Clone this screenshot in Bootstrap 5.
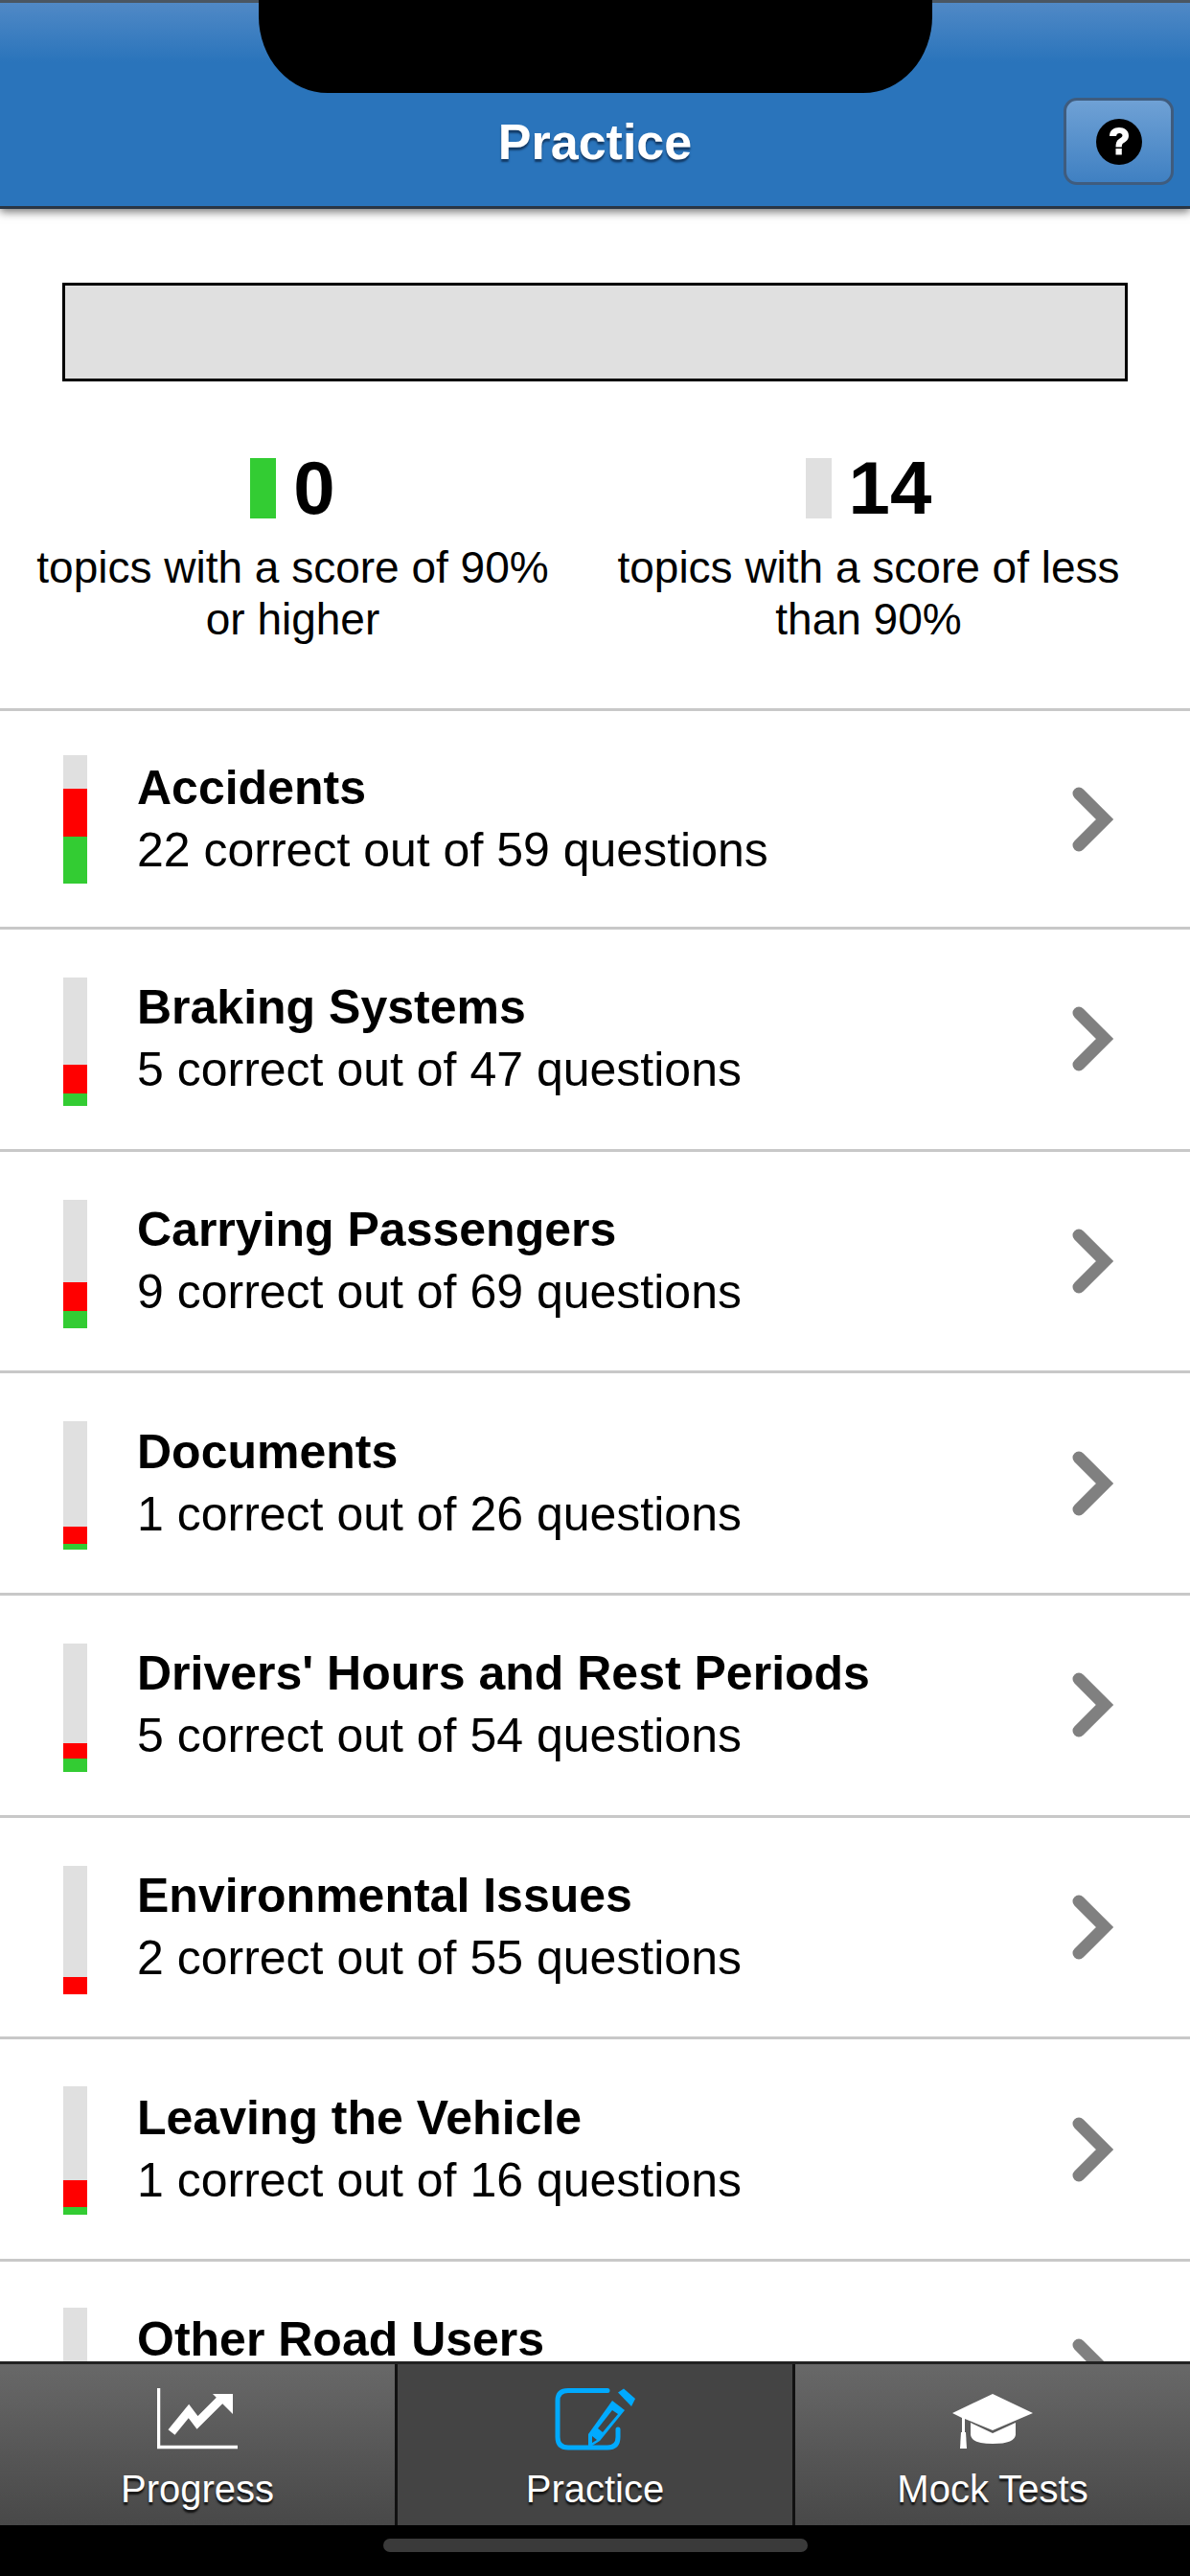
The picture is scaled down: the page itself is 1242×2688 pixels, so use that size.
<!DOCTYPE html>
<html lang="en">
<head>
  <meta charset="UTF-8">
  <meta name="viewport" content="width=device-width, initial-scale=1.0">
  <title>Practice</title>
  <link href="https://cdn.jsdelivr.net/npm/bootstrap@5.3.0/dist/css/bootstrap.min.css" rel="stylesheet">
  <style>
    html, body { height: 100%; }
    body {
      font-family: "Liberation Sans", Arial, sans-serif;
      background: #000;
      color: #000;
      width: 1242px;
      height: 2688px;
      overflow: hidden;
    }
    .app-header {
      height: 218px;
      padding: 99px 17px 22px 0;
      border-top: 3px solid #4a5662;
      border-bottom: 3px solid #2a3644;
      background: linear-gradient(#5089c6 0, #2a74bb 62px, #2a74bb 100%);
      box-shadow: 0 3px 9px rgba(0,0,0,.55);
      position: relative;
      z-index: 2;
    }
    .notch {
      position: absolute;
      top: -3px;
      left: 270px;
      width: 703px;
      height: 97px;
      background: #000;
      border-radius: 0 0 72px 72px / 0 0 80px 80px;
    }
    .app-title {
      flex: 1;
      text-align: center;
      padding-left: 132px;
      font-size: 52px;
      font-weight: 700;
      color: #fff;
      text-shadow: 0 3px 2px #123a66;
      line-height: 92px;
    }
    .help-btn {
      width: 115px;
      height: 91px;
      padding: 0;
      border: 3px solid #3f5c7e;
      border-radius: 14px;
      background: linear-gradient(#6fa1d5, #3f80c2);
    }
    .help-btn svg { display: block; margin: 0 auto; }
    .app-body { background: #fff; overflow: hidden; min-height: 0; }
    .overall-wrap { padding: 77px 65px 0; }
    .overall-bar { height: 103px; background: #e0e0e0; border: 3px solid #000; }
    .stats { padding: 80px 65px 66px 35px; gap: 60px; }
    .stat-head { height: 63px; gap: 18px; }
    .swatch { width: 27px; height: 63px; }
    .swatch-green { background: #33cc33; }
    .swatch-grey { background: #e0e0e0; }
    .stat-num { font-size: 78px; font-weight: 700; line-height: 63px; }
    .stat-text { font-size: 46px; line-height: 54px; margin-top: 24px; }
    .topic-row {
      height: 231.67px;
      padding: 0 79px 0 66px;
      border-top: 3px solid #c8c8c8;
    }
    .topic-row.first { height: 228px; }
    .score-bar {
      width: 25px;
      height: 134px;
      background: #e0e0e0;
    }
    .seg-red { background: #f00; }
    .seg-green { background: #33cc33; }
    .topic-text { padding-left: 52px; }
    .topic-name { font-size: 50px; font-weight: 700; line-height: 65px; }
    .topic-sub { font-size: 50px; line-height: 65px; }
    .tabbar {
      height: 171px;
      border-top: 3px solid #222;
      position: relative;
      z-index: 2;
    }
    .tab-item {
      flex: 1;
      background: linear-gradient(#686868, #484848);
      border-right: 3px solid #111;
      color: #fff;
      font-size: 40px;
      text-shadow: 0 3px 2px #111;
    }
    .tab-item:last-child { border-right: 0; }
    .tab-item.active { background: #444; }
    .tab-icon { height: 88px; padding-top: 24px; }
    .tab-label { line-height: 46px; margin-top: 19px; }
    .home-area { height: 53px; background: #000; padding-top: 14px; }
    .home-bar { width: 443px; height: 14px; border-radius: 7px; background: #3a3a3a; }
  </style>
</head>
<body class="d-flex flex-column">
  <header class="app-header d-flex flex-shrink-0 align-items-start">
    <div class="notch"></div>
    <div class="app-title">Practice</div>
    <button class="help-btn d-flex align-items-center justify-content-center" aria-label="Help">
      <svg width="48" height="48" viewBox="0 0 48 48">
        <circle cx="24" cy="24" r="24" fill="#000"/>
        <path d="M14 18c0-6 4.500-9 10-9s10 3 10 8.500c0 4-2.500 6-5 7.500-1.800 1.100-2.200 2-2.200 4.500h-6.300c0-4 .7-6.500 3.500-8.500 2-1.400 3.500-2.200 3.500-3.700 0-1.500-1.300-2.400-3-2.400-2 0-3.200 1.200-3.400 3.100z" fill="#fff"/>
        <rect x="20.500" y="31" width="6.300" height="6.500" fill="#fff"/>
      </svg>
    </button>
  </header>

  <main class="app-body flex-grow-1">
    <div class="overall-wrap"><div class="overall-bar"></div></div>
    <div class="stats d-flex text-center">
      <div class="flex-fill w-50">
        <div class="stat-head d-flex justify-content-center">
          <span class="swatch swatch-green"></span><span class="stat-num">0</span>
        </div>
        <div class="stat-text">topics with a score of 90% or higher</div>
      </div>
      <div class="flex-fill w-50">
        <div class="stat-head d-flex justify-content-center">
          <span class="swatch swatch-grey"></span><span class="stat-num">14</span>
        </div>
        <div class="stat-text">topics with a score of less than 90%</div>
      </div>
    </div>

    <div id="topics"></div>
  </main>

  <nav class="tabbar d-flex flex-shrink-0">
    <div class="tab-item text-center">
      <div class="tab-icon">
        <svg width="84" height="64" viewBox="0 0 84 64">
          <path d="M1.500 0V61.500H84" fill="none" stroke="#fff" stroke-width="3.500"/>
          <path d="M15 46L33 24L42 36L67 11" fill="none" stroke="#fff" stroke-width="9"/>
          <path d="M58 6H79V27z" fill="#fff"/>
        </svg>
      </div>
      <div class="tab-label">Progress</div>
    </div>
    <div class="tab-item active text-center">
      <div class="tab-icon">
        <svg width="84" height="66" viewBox="0 0 84 66" style="margin-top:-1px">
          <path d="M55 3.500H14Q3 3.500 3 14V52Q3 63 14 63H55Q66 63 66 52V44" fill="none" stroke="#00aaff" stroke-width="5" stroke-linecap="round"/>
          <path d="M60 14L73 24L47 56L35 63.500V49z" fill="#00aaff"/>
          <path d="M66 5.500L72 1.500L84 12L80 20z" fill="#00aaff"/>
          <path d="M60 24L66 28L50 47L45 43z" fill="#444"/>
          <path d="M39 51L44 55L39 58z" fill="#444"/>
        </svg>
      </div>
      <div class="tab-label">Practice</div>
    </div>
    <div class="tab-item text-center">
      <div class="tab-icon">
        <svg width="84" height="58" viewBox="0 0 84 58" style="margin-top:5px">
          <path d="M42 0L84 20L42 38L13 26V40H10V25L0 20z" fill="#fff"/>
          <path d="M19 30L42 41L66 30V42Q66 52 42 52Q19 52 19 42z" fill="#fff"/>
          <path d="M9 40H14L15 57H8z" fill="#fff"/>
        </svg>
      </div>
      <div class="tab-label">Mock Tests</div>
    </div>
  </nav>
  <div class="home-area d-flex justify-content-center flex-shrink-0"><div class="home-bar"></div></div>

  <script>
    // name, correct, total, red px, green px, offset of bar from row centre
    const topics = [
      ['Accidents', 22, 59, 50, 49, 0],
      ['Braking Systems', 5, 47, 30, 13, 3],
      ['Carrying Passengers', 9, 69, 30, 18, 3],
      ['Documents', 1, 26, 18, 6, 2],
      ["Drivers' Hours and Rest Periods", 5, 54, 16, 14, 3],
      ['Environmental Issues', 2, 55, 18, 0, 3],
      ['Leaving the Vehicle', 1, 16, 28, 8, 1],
      ['Other Road Users', 0, 40, 0, 0, 1]
    ];
    const chevron = '<svg width="44" height="68" viewBox="0 0 44 68"><path d="M7 7L34 34L7 61" fill="none" stroke="#808080" stroke-width="13" stroke-linejoin="miter" stroke-linecap="round"/></svg>';
    document.getElementById('topics').innerHTML = topics.map((t, i) =>
      `<div class="topic-row d-flex align-items-center ${i === 0 ? 'first' : ''}">
        <div class="score-bar d-flex flex-column justify-content-end flex-shrink-0" style="transform:translateY(${t[5]}px)">
          <div class="seg-red" style="height:${t[3]}px"></div>
          <div class="seg-green" style="height:${t[4]}px"></div>
        </div>
        <div class="topic-text flex-grow-1">
          <div class="topic-name">${t[0]}</div>
          <div class="topic-sub">${t[1]} correct out of ${t[2]} questions</div>
        </div>
        ${chevron}
      </div>`).join('');
  </script>
  <script src="https://cdn.jsdelivr.net/npm/bootstrap@5.3.0/dist/js/bootstrap.bundle.min.js"></script>
</body>
</html>
